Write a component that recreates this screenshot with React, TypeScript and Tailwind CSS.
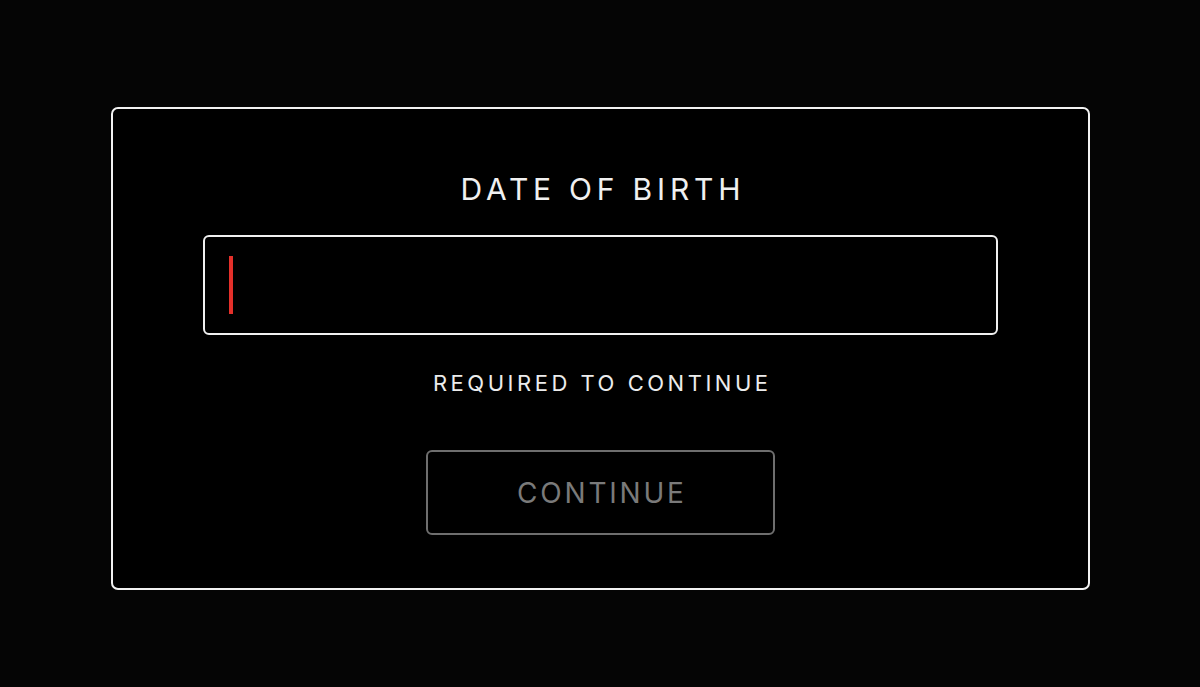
export default function App() {
  return (
    <div className="w-[1200px] h-[687px] bg-[#050505] overflow-hidden" style={{ fontFamily: 'Inter, "DejaVu Sans", sans-serif' }}>
      <div className="ml-[111px] mt-[107px] w-[979px] h-[483px] border-2 border-[#f2f2f2] rounded-[7px] bg-black flex flex-col items-center">
        <div className="mt-[62px] h-[36px] leading-[36px] text-[30px] tracking-[0.16em] pl-[0.16em] text-[#f0f0f0] font-normal">DATE OF BIRTH</div>
        <div className="mt-[28px] w-[795px] h-[100px] border-2 border-[#f0f0f0] rounded-[6px] flex items-center pl-[24px]">
          <div className="w-[4px] h-[58px] bg-[#e5302a]" />
        </div>
        <div className="mt-[34px] h-[28px] leading-[28px] text-[22px] tracking-[0.16em] pl-[0.16em] text-[#ececec]">REQUIRED TO CONTINUE</div>
        <div className="mt-[53px] w-[349px] h-[85px] border-2 border-[#6e6e6e] rounded-[6px] flex items-center justify-center">
          <span className="text-[28px] tracking-[0.1em] pl-[0.1em] text-[#7a7a7a]">CONTINUE</span>
        </div>
      </div>
    </div>
  );
}
